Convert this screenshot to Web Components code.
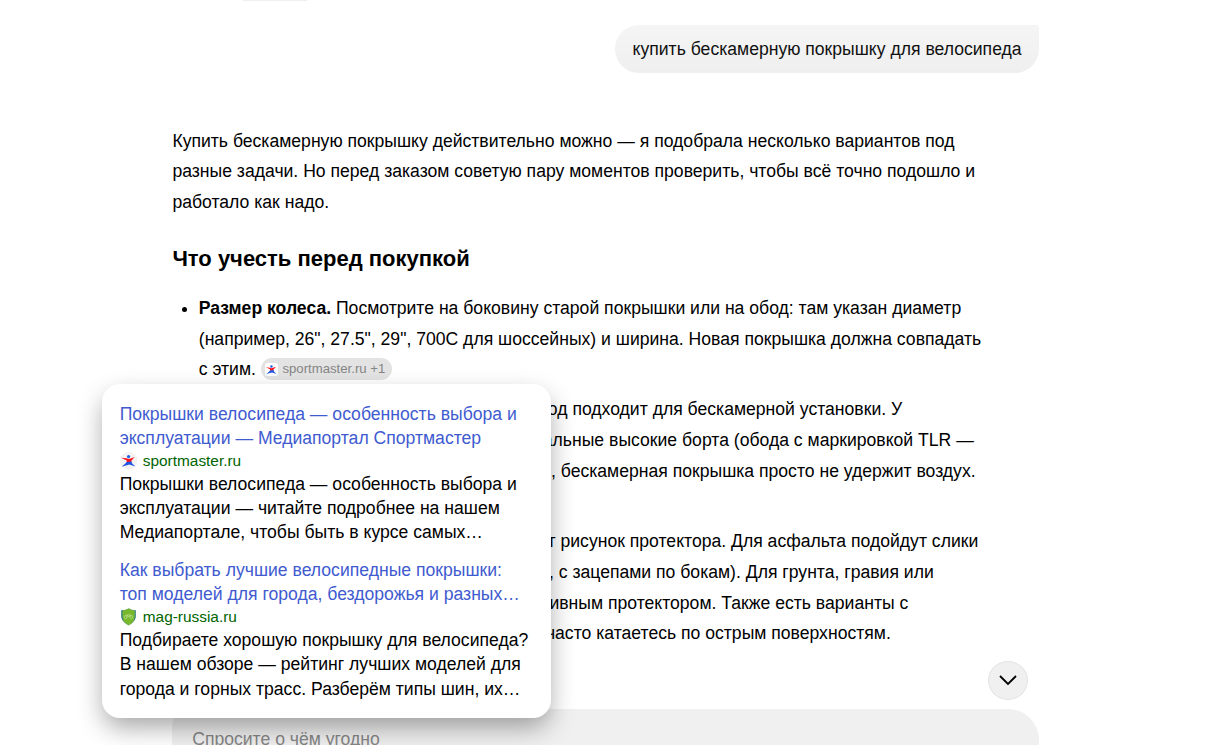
<!DOCTYPE html>
<html lang="ru">
<head>
  <meta charset="UTF-8">
  <title>Чат</title>
  <style>
    html, body {
      margin: 0;
      height: 745px;
      overflow: hidden;
      background: #fff;
    }
    body {
      font: 17.6px/30.8px "Liberation Sans", Arial, sans-serif;
      color: #000;
    }
  </style>
</head>
<body>

<chat-page>
  <user-message>купить бескамерную покрышку для велосипеда</user-message>
  <chat-answer>
    <answer-text>Купить бескамерную покрышку действительно можно — я подобрала несколько вариантов под<br>разные задачи. Но перед заказом советую пару моментов проверить, чтобы всё точно подошло и<br>работало как надо.</answer-text>
    <answer-heading>Что учесть перед покупкой</answer-heading>
    <answer-item><b>Размер колеса.</b> Посмотрите на боковину старой покрышки или на обод: там указан диаметр<br>(например, 26", 27.5", 29", 700C для шоссейных) и ширина. Новая покрышка должна совпадать<br>с этим. <source-chip>sportmaster.ru +1</source-chip></answer-item>
    <answer-item>
      <answer-line style="width:703.4px">обод подходит для бескамерной установки. У</answer-line>
      <answer-line style="width:775px">специальные высокие борта (обода с маркировкой TLR —</answer-line>
      <answer-line style="width:776.8px">, бескамерная покрышка просто не удержит воздух.</answer-line>
      <answer-line></answer-line>
    </answer-item>
    <answer-item>
      <answer-line style="width:779.5px">от рисунок протектора. Для асфальта подойдут слики</answer-line>
      <answer-line style="width:735px">, с зацепами по бокам). Для грунта, гравия или</answer-line>
      <answer-line style="width:709.5px">агрессивным протектором. Также есть варианты с</answer-line>
      <answer-line style="width:692px">часто катаетесь по острым поверхностям.</answer-line>
    </answer-item>
  </chat-answer>
  <chat-input slot="footer">Спросите о чём угодно</chat-input>
  <scroll-button slot="overlay"></scroll-button>
  <source-popup slot="overlay">
    <source-card icon="sportmaster">
      <span slot="title">Покрышки велосипеда — особенность выбора и<br>эксплуатации — Медиапортал Спортмастер</span>
      <span slot="host">sportmaster.ru</span>
      Покрышки велосипеда — особенность выбора и<br>эксплуатации — читайте подробнее на нашем<br>Медиапортале, чтобы быть в курсе самых…
    </source-card>
    <source-card icon="mag">
      <span slot="title">Как выбрать лучшие велосипедные покрышки:<br>топ моделей для города, бездорожья и разных…</span>
      <span slot="host">mag-russia.ru</span>
      Подбираете хорошую покрышку для велосипеда?<br>В нашем обзоре — рейтинг лучших моделей для<br>города и горных трасс. Разберём типы шин, их…
    </source-card>
  </source-popup>
</chat-page>

<script>
const runner = `
  <circle cx="8.6" cy="4.6" r="1.6" fill="#1f5fe8"/>
  <path d="M1 5.8 L6.6 6.3 L8.6 7 L10.6 6.4 L14.6 5 L11.4 8.8 L11.4 10 L6.4 10.4 L6.8 8.4 Z" fill="#fb1420"/>
  <path d="M6.6 9.9 L11.4 9.4 L12.2 11.6 L15.4 14.6 L9.4 12.6 L1.6 14.8 L5.4 11.6 Z" fill="#1f55e0"/>`;

const icons = {
  sportmaster: `<svg viewBox="0 0 17.6 17.6"><circle cx="8.8" cy="8.8" r="8.8" fill="#f3f3f3"/>${runner}</svg>`,
  mag: `<svg viewBox="0 0 17.6 17.6">
    <path d="M1.4 2.2 Q5.6 2 8.8 .2 Q12 2 15.6 2.2 V9 Q15.2 14.4 8.6 17.5 Q2 14.4 1.4 9 Z" fill="#6fa768"/>
    <path d="M1.4 2.2 L2.6 2.2 V9 L3.6 12.6 Q1.4 11 1.4 9 Z M15.6 2.2 L14.6 2.2 V9 L13.8 12.2 Q15.6 11 15.6 9 Z" fill="#1f6f94"/>
    <path d="M2.6 3 Q6 2.4 8.6 .8 Q11.4 2.4 14.6 3 V9 Q14.2 14 8.6 16.9 Q3 14 2.6 9 Z" fill="#78b82c"/>
    <g fill="none" stroke="#c4e29a" stroke-width=".6"><circle cx="5.8" cy="9" r="1.6"/><circle cx="11.2" cy="9" r="1.6"/><path d="M5.8 9 L7.2 6.8 H10.2 L11.2 9 M7.2 6.8 L8.6 9 L10.2 6.8"/></g>
  </svg>`
};

class BaseElement extends HTMLElement {
  connectedCallback() {
    if (this.shadowRoot) return;
    this.attachShadow({mode: 'open'});
    this.shadowRoot.innerHTML = this.template();
  }
  template() { return '<slot></slot>'; }
}

class ChatPage extends BaseElement {
  template() {
    return `
      <style>
        :host {
          display: flex;
          flex-direction: column;
          position: relative;
          height: 745px;
          overflow: hidden;
        }
        .tail { flex: none; width: 64px; height: 1px; margin-left: 243px; background: #efefef; }
        main {
          flex: 1;
          min-height: 0;
          overflow: hidden;
          display: flex;
          flex-direction: column;
          width: 866.8px;
          margin-left: 172.4px;
          padding-top: 24px;
          box-sizing: border-box;
        }
      </style>
      <div class="tail"></div>
      <main><slot></slot></main>
      <slot name="footer"></slot>
      <slot name="overlay"></slot>
    `;
  }
}

class UserMessage extends BaseElement {
  template() {
    return `
      <style>
        :host {
          display: block;
          flex: none;
          align-self: flex-end;
          padding: 8.8px 17.6px;
          height: 48px;
          box-sizing: border-box;
          white-space: nowrap;
          color: #111;
          background: linear-gradient(#f5f5f5, #efefef);
          border-radius: 24px 3px 24px 24px;
        }
      </style>
      <slot></slot>
    `;
  }
}

class ChatAnswer extends BaseElement {
  template() {
    return `
      <style>
        :host { display: block; flex: none; padding-top: 52.5px; white-space: nowrap; }
      </style>
      <slot></slot>
    `;
  }
}

class AnswerText extends BaseElement {
  template() {
    return '<style>:host { display: block; }</style><slot></slot>';
  }
}

class AnswerHeading extends BaseElement {
  template() {
    return `
      <style>
        :host { display: block; font-size: 22px; font-weight: bold; line-height: 30px; padding: 26.2px 0 18.8px; }
      </style>
      <slot></slot>
    `;
  }
}

class AnswerItem extends BaseElement {
  template() {
    return `
      <style>
        :host { display: list-item; list-style: disc; margin: 0 0 8.8px 26.4px; }
      </style>
      <slot></slot>
    `;
  }
}

// one line of text set against its right edge
class AnswerLine extends BaseElement {
  template() {
    return `
      <style>
        :host { display: block; height: 30.8px; text-align: right; }
      </style>
      <slot></slot>
    `;
  }
}

class SourceChip extends BaseElement {
  template() {
    return `
      <style>
        :host {
          display: inline-flex;
          align-items: center;
          gap: 4.2px;
          height: 22px;
          margin-top: -2px;
          margin-bottom: 1px;
          padding: 0 6.6px 0 4.2px;
          box-sizing: border-box;
          vertical-align: middle;
          border-radius: 11px;
          background: #e3e3e3;
          color: #858585;
          font-size: 13.2px;
          line-height: 20px;
        }
        svg { width: 13.2px; height: 13.2px; background: #fff; border-radius: 3px; }
        span { padding-bottom: 1px; }
      </style>
      <svg viewBox="0 0 17.6 17.6">${runner}</svg>
      <span><slot></slot></span>
    `;
  }
}

class ChatInput extends BaseElement {
  template() {
    return `
      <style>
        :host {
          display: block;
          flex: none;
          width: 866.8px;
          height: 36px;
          margin-left: 172.2px;
          padding: 14.5px 20px 0;
          box-sizing: border-box;
          overflow: hidden;
          background: #f0f0f0;
          border-radius: 18px 31px 0 0;
          color: #868686;
          white-space: nowrap;
        }
      </style>
      <slot></slot>
    `;
  }
}

class ScrollButton extends BaseElement {
  template() {
    return `
      <style>
        :host { position: absolute; left: 988px; top: 661px; width: 40px; height: 39px; }
        button {
          display: flex;
          width: 100%;
          height: 100%;
          padding: 0 0 1px;
          align-items: center;
          justify-content: center;
          box-sizing: border-box;
          border: 1px solid #e4e4e4;
          border-radius: 50%;
          background: #f0f0f0;
        }
      </style>
      <button aria-label="Вниз">
        <svg width="20" height="12" viewBox="0 0 20 12"><path d="M2 2 L10 10 L18 2" fill="none" stroke="#000" stroke-width="1.8"/></svg>
      </button>
    `;
  }
}

class SourcePopup extends BaseElement {
  template() {
    return `
      <style>
        :host {
          position: absolute;
          left: 102.1px;
          top: 384.05px;
          width: 448.8px;
          height: 334.2px;
          display: flex;
          flex-direction: column;
          gap: 13.2px;
          padding: 17.6px;
          box-sizing: border-box;
          background: #fff;
          border-radius: 18px;
          box-shadow: 0 11px 26px -2px rgba(0, 0, 0, .36);
          line-height: 24.2px;
          white-space: nowrap;
        }
      </style>
      <slot></slot>
    `;
  }
}

class SourceCard extends BaseElement {
  template() {
    return `
      <style>
        :host { display: block; }
        .title { color: #3f5bd0; }
        .host {
          display: flex;
          align-items: center;
          gap: 5.5px;
          height: 22px;
          color: #006400;
          font-size: 15.4px;
          line-height: 22px;
        }
        svg { display: block; width: 17.6px; height: 17.6px; }
      </style>
      <div class="title"><slot name="title"></slot></div>
      <div class="host">${icons[this.getAttribute('icon')]}<slot name="host"></slot></div>
      <div><slot></slot></div>
    `;
  }
}

customElements.define('chat-page', ChatPage);
customElements.define('user-message', UserMessage);
customElements.define('chat-answer', ChatAnswer);
customElements.define('answer-text', AnswerText);
customElements.define('answer-heading', AnswerHeading);
customElements.define('answer-item', AnswerItem);
customElements.define('answer-line', AnswerLine);
customElements.define('source-chip', SourceChip);
customElements.define('chat-input', ChatInput);
customElements.define('scroll-button', ScrollButton);
customElements.define('source-popup', SourcePopup);
customElements.define('source-card', SourceCard);
</script>
</body>
</html>
